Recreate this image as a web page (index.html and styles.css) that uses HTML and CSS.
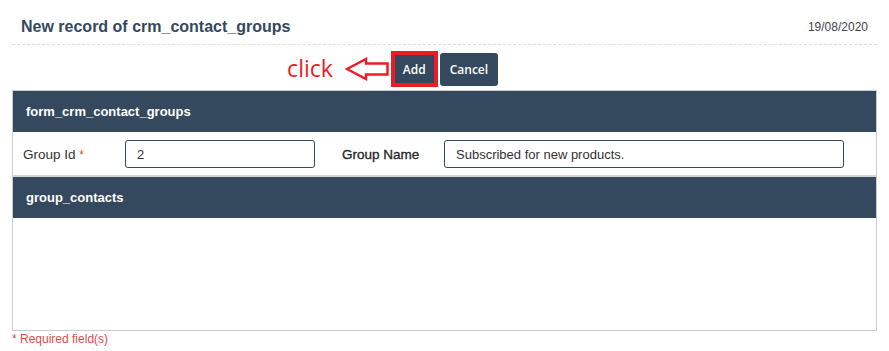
FILE: index.html
```html
<!DOCTYPE html>
<html lang="en">
<head>
  <meta charset="UTF-8" />
  <meta name="viewport" content="width=device-width, initial-scale=1" />
  <title>New record of crm_contact_groups</title>
  <link rel="stylesheet" href="styles.css">
</head>
<body>
  <div class="page-header">
    <h1 class="page-title">New record of crm_contact_groups</h1>
    <div class="page-date">19/08/2020</div>
  </div>

  <div class="toolbar">
    <div class="toolbar-buttons">
      <button class="btn btn-add">
        Add
        <span class="hint">
          <span class="hint-text">click</span>
          <svg class="hint-arrow" width="44" height="24" viewBox="0 0 44 24">
            <polygon points="2,12 21,2 21,6.5 42.5,6.5 42.5,17.5 21,17.5 21,22" fill="#fff" stroke="#ed1c24" stroke-width="2.5" stroke-linejoin="miter" />
          </svg>
        </span>
      </button>
      <button class="btn">Cancel</button>
    </div>
  </div>

  <div class="panel">
    <div class="panel-header">form_crm_contact_groups</div>
    <div class="form-row">
      <label class="field-label">Group Id <span class="required">*</span></label>
      <input class="field-input" type="text" value="2" />
      <label class="field-label field-label-strong">Group Name</label>
      <input class="field-input" type="text" value="Subscribed for new products." />
    </div>
    <div class="panel-header">group_contacts</div>
    <div class="panel-body"></div>
  </div>

  <div class="required-note">* Required field(s)</div>
</body>
</html>
```

FILE: styles.css
```css
* {
  box-sizing: border-box;
  margin: 0;
  padding: 0;
}

body {
  font-family: "Liberation Sans", Arial, sans-serif;
  background: #fff;
  color: #333;
  font-size: 13px;
}

.page-header {
  display: flex;
  justify-content: space-between;
  align-items: center;
  margin: 0 12px;
  padding: 9px 9px 0 9px;
  height: 45px;
  border-bottom: 1px dashed #ddd;
}

.page-title {
  font-size: 16px;
  font-weight: bold;
  color: #34495e;
}

.page-date {
  font-size: 12px;
  color: #444;
}

.toolbar {
  display: flex;
  justify-content: center;
  padding: 6px 0 3px 0;
}

.toolbar-buttons {
  display: flex;
  align-items: center;
  gap: 2px;
}

.btn {
  position: relative;
  font-family: "Open Sans", sans-serif;
  font-size: 12px;
  font-weight: 600;
  color: #fff;
  background: #35495e;
  border: none;
  border-radius: 3px;
  height: 33px;
  padding: 0 10px;
  cursor: pointer;
}

.btn-add {
  height: 36px;
  border: 4px solid #ed1c24;
  border-radius: 0;
  padding: 0 8px;
}

.hint {
  position: absolute;
  right: calc(100% + 6px);
  top: 50%;
  transform: translateY(-50%);
  display: flex;
  align-items: center;
  gap: 12px;
  pointer-events: none;
}

.hint-text {
  font-family: "Open Sans", sans-serif;
  font-size: 23px;
  font-weight: 400;
  color: #ed1c24;
  line-height: 1;
  margin-top: -2px;
}

.hint-arrow {
  display: block;
}

.panel {
  margin: 0 12px;
  border: 1px solid #ccc;
}

.panel-header {
  background: #35495e;
  color: #fff;
  font-weight: bold;
  font-size: 13px;
  height: 41px;
  display: flex;
  align-items: center;
  padding-left: 13px;
}

.form-row {
  display: grid;
  grid-template-columns: 102px 190px 129px 400px;
  align-items: center;
  padding: 8px 10px 7px 10px;
  border-bottom: 2px solid #d5d5d5;
}

.field-label {
  font-size: 13.5px;
  color: #333;
}

.field-label-strong {
  padding-left: 27px;
  color: #2a2a2a;
  -webkit-text-stroke: 0.35px #2a2a2a;
}

.required {
  color: #e74c3c;
  font-size: 12px;
}

.field-input {
  height: 28px;
  border: 1px solid #35495e;
  border-radius: 3px;
  padding: 0 11px;
  font-family: "Liberation Sans", Arial, sans-serif;
  font-size: 13px;
  color: #333;
}

.panel-body {
  height: 112px;
}

.required-note {
  margin: 0 12px;
  padding-top: 1px;
  color: #e04b4b;
  font-size: 12px;
}
```
